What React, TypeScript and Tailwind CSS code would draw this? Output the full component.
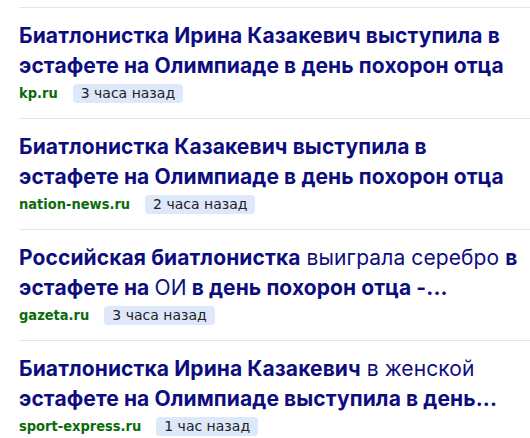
import React from "react";

type Part = { t: string; b?: boolean };

type Story = {
  lines: Part[][];
  source: string;
  time: string;
};

const stories: Story[] = [
  {
    lines: [
      [{ t: "Биатлонистка Ирина Казакевич выступила в", b: true }],
      [{ t: "эстафете на Олимпиаде в день похорон отца", b: true }],
    ],
    source: "kp.ru",
    time: "3 часа назад",
  },
  {
    lines: [
      [{ t: "Биатлонистка Казакевич выступила в", b: true }],
      [{ t: "эстафете на Олимпиаде в день похорон отца", b: true }],
    ],
    source: "nation-news.ru",
    time: "2 часа назад",
  },
  {
    lines: [
      [
        { t: "Российская биатлонистка", b: true },
        { t: " выиграла серебро " },
        { t: "в", b: true },
      ],
      [
        { t: "эстафете на ", b: true },
        { t: "ОИ" },
        { t: " в день похорон отца -...", b: true },
      ],
    ],
    source: "gazeta.ru",
    time: "3 часа назад",
  },
  {
    lines: [
      [
        { t: "Биатлонистка Ирина Казакевич", b: true },
        { t: " в женской" },
      ],
      [{ t: "эстафете на Олимпиаде выступила в день...", b: true }],
    ],
    source: "sport-express.ru",
    time: "1 час назад",
  },
];

function StoryItem({ story }: { story: Story }) {
  return (
    <div className="border-t border-[#e6e6e6] pt-[13px] pb-[15px]">
      <a className="block text-[21px] leading-[30px] text-[#0d0d80] font-['Inter',sans-serif] tracking-[0.1px]">
        {story.lines.map((line, i) => (
          <span key={i} className="block whitespace-nowrap">
            {line.map((p, j) => (
              <span key={j} className={p.b ? "font-bold" : "font-normal"}>
                {p.t}
              </span>
            ))}
          </span>
        ))}
      </a>
      <div className="mt-[3px] flex items-center gap-[15px]">
        <span className="font-['DejaVu_Sans_Condensed','DejaVu_Sans',sans-serif] text-[14.5px] font-bold text-[#0b6b0b] leading-[19px]">
          {story.source}
        </span>
        <span className="font-['DejaVu_Sans',sans-serif] rounded-[4px] bg-[#dde8fb] px-[8px] text-[14px] leading-[19px] text-[#222]">
          {story.time}
        </span>
      </div>
    </div>
  );
}

export default function App() {
  return (
    <div className="h-[438px] w-[530px] overflow-hidden bg-white pl-[19px] pt-[7px]">
      {stories.map((s, i) => (
        <StoryItem key={i} story={s} />
      ))}
    </div>
  );
}
